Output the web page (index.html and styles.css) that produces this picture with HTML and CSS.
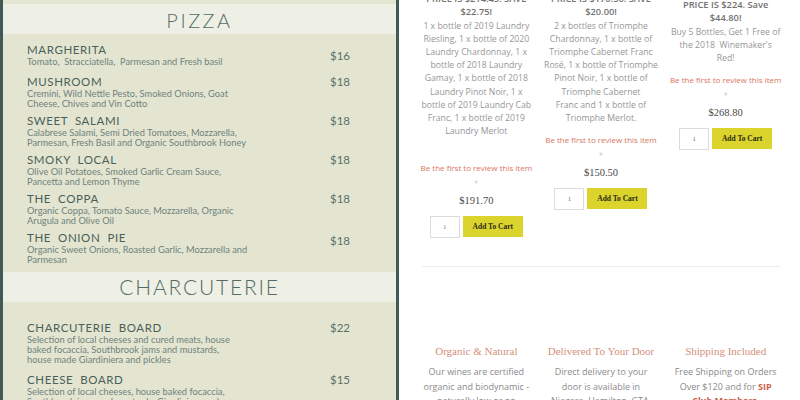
FILE: index.html
```html
<!DOCTYPE html>
<html lang="en">
<head>
<meta charset="utf-8">
<title>Menu and Shop</title>
<link rel="stylesheet" href="styles.css">
</head>
<body>
<div class="page">
  <section class="menu">
    <div class="band band--pizza"><h2>PIZZA</h2></div>
    <div class="items items--pizza">
      <div class="item item--single">
        <div class="info"><h3>MARGHERITA</h3><p>Tomato,&nbsp; Stracciatella,&nbsp; Parmesan and Fresh basil</p></div>
        <span class="price price--mid">$16</span>
      </div>
      <div class="item">
        <div class="info"><h3>MUSHROOM</h3><p>Cremini, Wild Nettle Pesto, Smoked Onions, Goat Cheese, Chives and Vin Cotto</p></div>
        <span class="price">$18</span>
      </div>
      <div class="item">
        <div class="info"><h3>SWEET&nbsp; SALAMI</h3><p>Calabrese Salami, Semi Dried Tomatoes, Mozzarella, Parmesan, Fresh Basil and Organic Southbrook Honey</p></div>
        <span class="price">$18</span>
      </div>
      <div class="item">
        <div class="info"><h3>SMOKY&nbsp; LOCAL</h3><p>Olive Oil Potatoes, Smoked Garlic Cream Sauce, Pancetta and Lemon Thyme</p></div>
        <span class="price">$18</span>
      </div>
      <div class="item">
        <div class="info"><h3>THE&nbsp; COPPA</h3><p>Organic Coppa, Tomato Sauce, Mozzarella, Organic Arugula and Olive Oil</p></div>
        <span class="price">$18</span>
      </div>
      <div class="item">
        <div class="info"><h3>THE&nbsp; ONION&nbsp; PIE</h3><p>Organic Sweet Onions, Roasted Garlic, Mozzarella and Parmesan</p></div>
        <span class="price price--low">$18</span>
      </div>
    </div>
    <div class="band band--charc"><h2>CHARCUTERIE</h2></div>
    <div class="items items--charc">
      <div class="item">
        <div class="info"><h3>CHARCUTERIE&nbsp; BOARD</h3><p>Selection of local cheeses and cured meats, house baked focaccia, Southbrook jams and mustards,<br>house made Giardiniera and pickles</p></div>
        <span class="price">$22</span>
      </div>
      <div class="item">
        <div class="info"><h3>CHEESE&nbsp; BOARD</h3><p>Selection of local cheeses, house baked focaccia, Southbrook jams and mustards, Giardiniera and pickles</p></div>
        <span class="price">$15</span>
      </div>
    </div>
  </section>

  <section class="shop">
    <div class="products">
      <div class="product">
        <p class="deal">PRICE IS $214.45. SAVE<br>$22.75!</p>
        <p class="desc desc--spaced">1 x bottle of 2019 Laundry<br>Riesling, 1 x bottle of 2020<br>Laundry Chardonnay, 1 x<br>bottle of 2018 Laundry<br>Gamay, 1 x bottle of 2018<br>Laundry Pinot Noir, 1 x<br>bottle of 2019 Laundry Cab<br>Franc, 1 x bottle of 2019<br>Laundry Merlot</p>
        <a class="review" href="#">Be the first to review this item</a>
        <span class="more">»</span>
        <span class="cost">$191.70</span>
        <form class="cart"><input class="qty" type="text" value="1"><button class="add" type="button">Add To Cart</button></form>
      </div>
      <div class="product">
        <p class="deal">PRICE IS $170.50. SAVE<br>$20.00!</p>
        <p class="desc">2 x bottles of Triomphe<br>Chardonnay, 1 x bottle of<br>Triomphe Cabernet Franc<br>Rosé, 1 x bottle of Triomphe<br>Pinot Noir, 1 x bottle of<br>Triomphe Cabernet<br>Franc and 1 x bottle of<br>Triomphe Merlot.</p>
        <a class="review" href="#">Be the first to review this item</a>
        <span class="more">»</span>
        <span class="cost">$150.50</span>
        <form class="cart"><input class="qty" type="text" value="1"><button class="add" type="button">Add To Cart</button></form>
      </div>
      <div class="product product--raised">
        <p class="deal">6 BOTTLES. REGULAR<br>PRICE IS $224. Save<br>$44.80!</p>
        <p class="desc">Buy 5 Bottles, Get 1 Free of<br>the 2018&nbsp; Winemaker's<br>Red!</p>
        <a class="review" href="#">Be the first to review this item</a>
        <span class="more">»</span>
        <span class="cost">$268.80</span>
        <form class="cart"><input class="qty" type="text" value="1"><button class="add" type="button">Add To Cart</button></form>
      </div>
    </div>
    <hr class="rule">
    <div class="features">
      <div class="feature">
        <h4>Organic &amp; Natural</h4>
        <p>Our wines are certified<br>organic and biodynamic -<br>naturally low or no</p>
      </div>
      <div class="feature">
        <h4>Delivered To Your Door</h4>
        <p>Direct delivery to your<br>door is available in<br>Niagara, Hamilton, GTA,</p>
      </div>
      <div class="feature">
        <h4>Shipping Included</h4>
        <p>Free Shipping on Orders<br>Over $120 and for <strong>SIP<br>Club Members</strong>.</p>
      </div>
    </div>
  </section>
</div>
</body>
</html>
```

FILE: styles.css
```css
* { box-sizing: border-box; }
html, body { margin: 0; padding: 0; }
body { width: 800px; height: 400px; overflow: hidden; background: #fff; }

.page { display: flex; width: 800px; height: 400px; overflow: hidden; }

/* ---------- menu ---------- */
.menu {
  width: 399px;
  flex: none;
  background: #e3e5d1;
  border-left: 3px solid #3e5c55;
  border-right: 3px solid #3e5c55;
  padding-top: 4px;
  font-family: Lato, "Open Sans", sans-serif;
  color: #4b615b;
}
.band {
  height: 30px;
  background: #eef0e5;
  display: flex;
  align-items: center;
  justify-content: center;
}
.band h2 {
  margin: 0;
  font-weight: 300;
  color: #556c66;
  line-height: 30px;
}
.band--pizza h2 { font-size: 20px; letter-spacing: 2.5px; padding-top: 1px; }
.band--charc h2 { font-size: 21px; letter-spacing: 1.8px; }

.items { display: flex; flex-direction: column; padding-left: 24px; }
.items--pizza { padding-top: 9px; padding-bottom: 7px; gap: 5px; }
.items--charc { padding-top: 19px; gap: 8px; }

.item { display: grid; grid-template-columns: 303px auto; align-items: start; }
.item--single { margin-bottom: 3px; }
.info { max-width: 222px; }
.info h3 {
  margin: 0;
  font-size: 11.5px;
  line-height: 14px;
  font-weight: 400;
  letter-spacing: 0.6px;
  color: #4a5f59;
}
.info p {
  margin: 0;
  font-size: 9.3px;
  line-height: 10px;
  color: #70827c;
}
.price { font-size: 11.5px; line-height: 14px; color: #5b706a; }
.price--mid { margin-top: 6px; }
.price--low { margin-top: 3px; }

/* ---------- shop ---------- */
.shop {
  flex: 1;
  padding: 0 12px 0 15px;
  font-family: "Open Sans", Lato, sans-serif;
  overflow: hidden;
}
.products {
  display: grid;
  grid-template-columns: repeat(3, 1fr);
  align-items: start;
  margin-top: -8.5px;
}
.product { display: flex; flex-direction: column; align-items: center; text-align: center; }
.product--raised { margin-top: -7px; }
.deal {
  margin: 0;
  font-size: 9.3px;
  line-height: 13px;
  font-weight: 600;
  color: #727272;
  white-space: nowrap;
}
.desc {
  margin: 2px 0 0;
  font-size: 8.7px;
  line-height: 13.2px;
  color: #969696;
  white-space: nowrap;
}
.desc--spaced { margin-bottom: 15px; }
.review {
  margin-top: 8px;
  font-size: 8px;
  line-height: 13px;
  color: #d8765f;
  text-decoration: none;
  white-space: nowrap;
}
.more { margin-top: 1px; font-size: 7px; line-height: 13px; color: #d9a69a; }
.cost {
  margin-top: 6px;
  font-family: "Liberation Serif", serif;
  font-size: 10.5px;
  line-height: 14px;
  color: #4a4a4a;
}
.cart { display: flex; gap: 3px; margin-top: 8px; }
.qty {
  width: 30px;
  height: 22px;
  border: 1px solid #dcdcdc;
  padding: 0;
  text-align: center;
  font-family: "Liberation Serif", serif;
  font-size: 7px;
  color: #777;
  background: #fff;
}
.add {
  width: 60px;
  height: 21px;
  border: 0;
  padding: 0;
  background: #dbd42c;
  font-family: "Liberation Serif", serif;
  font-weight: 700;
  font-size: 7.5px;
  color: #2a2a14;
}

.rule {
  margin: 28px 8px 0;
  border: 0;
  border-top: 1px solid #ececec;
}
.features {
  display: grid;
  grid-template-columns: repeat(3, 1fr);
  padding-top: 76px;
  text-align: center;
}
.feature h4 {
  margin: 0;
  font-family: "Liberation Serif", serif;
  font-weight: 400;
  font-size: 11px;
  line-height: 16px;
  color: #d4907d;
}
.feature p {
  margin: 6px 0 0;
  font-size: 9px;
  line-height: 14.5px;
  color: #8a8a8a;
}
.feature strong { color: #c9604a; font-weight: 700; }
```
